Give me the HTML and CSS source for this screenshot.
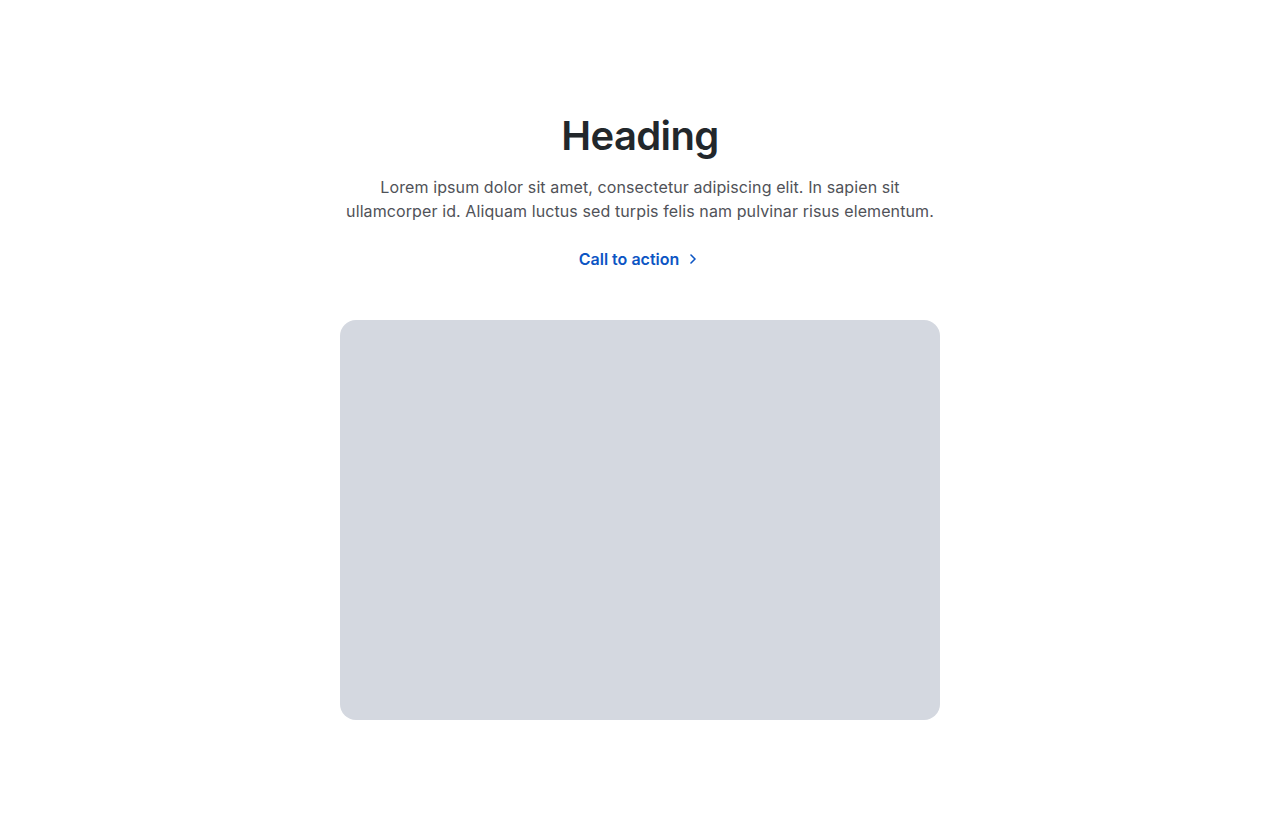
FILE: index.html
```html
<!DOCTYPE html>
<html lang="en">
<head>
<meta charset="utf-8">
<title>Heading</title>
<link rel="stylesheet" href="styles.css">
</head>
<body>
<section class="hero">
  <h1 class="hero-title">Heading</h1>
  <p class="hero-text">Lorem ipsum dolor sit amet, consectetur adipiscing elit. In sapien sit ullamcorper id. Aliquam luctus sed turpis felis nam pulvinar risus elementum.</p>
  <a class="hero-cta" href="#">Call to action
    <svg class="hero-cta-icon" width="16" height="16" viewBox="0 0 16 16" aria-hidden="true"><path d="M6 4l4 4-4 4" fill="none" stroke="currentColor" stroke-width="1.6" stroke-linecap="round" stroke-linejoin="round"/></svg>
  </a>
  <div class="hero-media"></div>
</section>
</body>
</html>
```
FILE: styles.css
```css
* { box-sizing: border-box; }
body {
  margin: 0;
  background: #ffffff;
  font-family: Inter, "Noto Sans", sans-serif;
  color: #292a2e;
}
.hero {
  width: 600px;
  margin: 0 auto;
  padding: 112px 0 0;
  display: flex;
  flex-direction: column;
  align-items: center;
  text-align: center;
}
.hero-title {
  margin: 0;
  font-size: 40px;
  line-height: 48px;
  font-weight: 600;
  letter-spacing: -0.6px;
  color: #22272b;
}
.hero-text {
  margin: 15px 0 0;
  font-size: 16px;
  line-height: 24px;
  letter-spacing: 0.1px;
  color: #505258;
}
.hero-cta {
  margin-top: 24px;
  display: flex;
  align-items: center;
  gap: 6px;
  font-size: 16px;
  line-height: 24px;
  font-weight: 600;
  color: #0c55c4;
  text-decoration: none;
}
.hero-cta-icon { display: block; }
.hero-media {
  margin-top: 49px;
  width: 600px;
  height: 400px;
  border-radius: 16px;
  background: #d4d8e0;
}
```
